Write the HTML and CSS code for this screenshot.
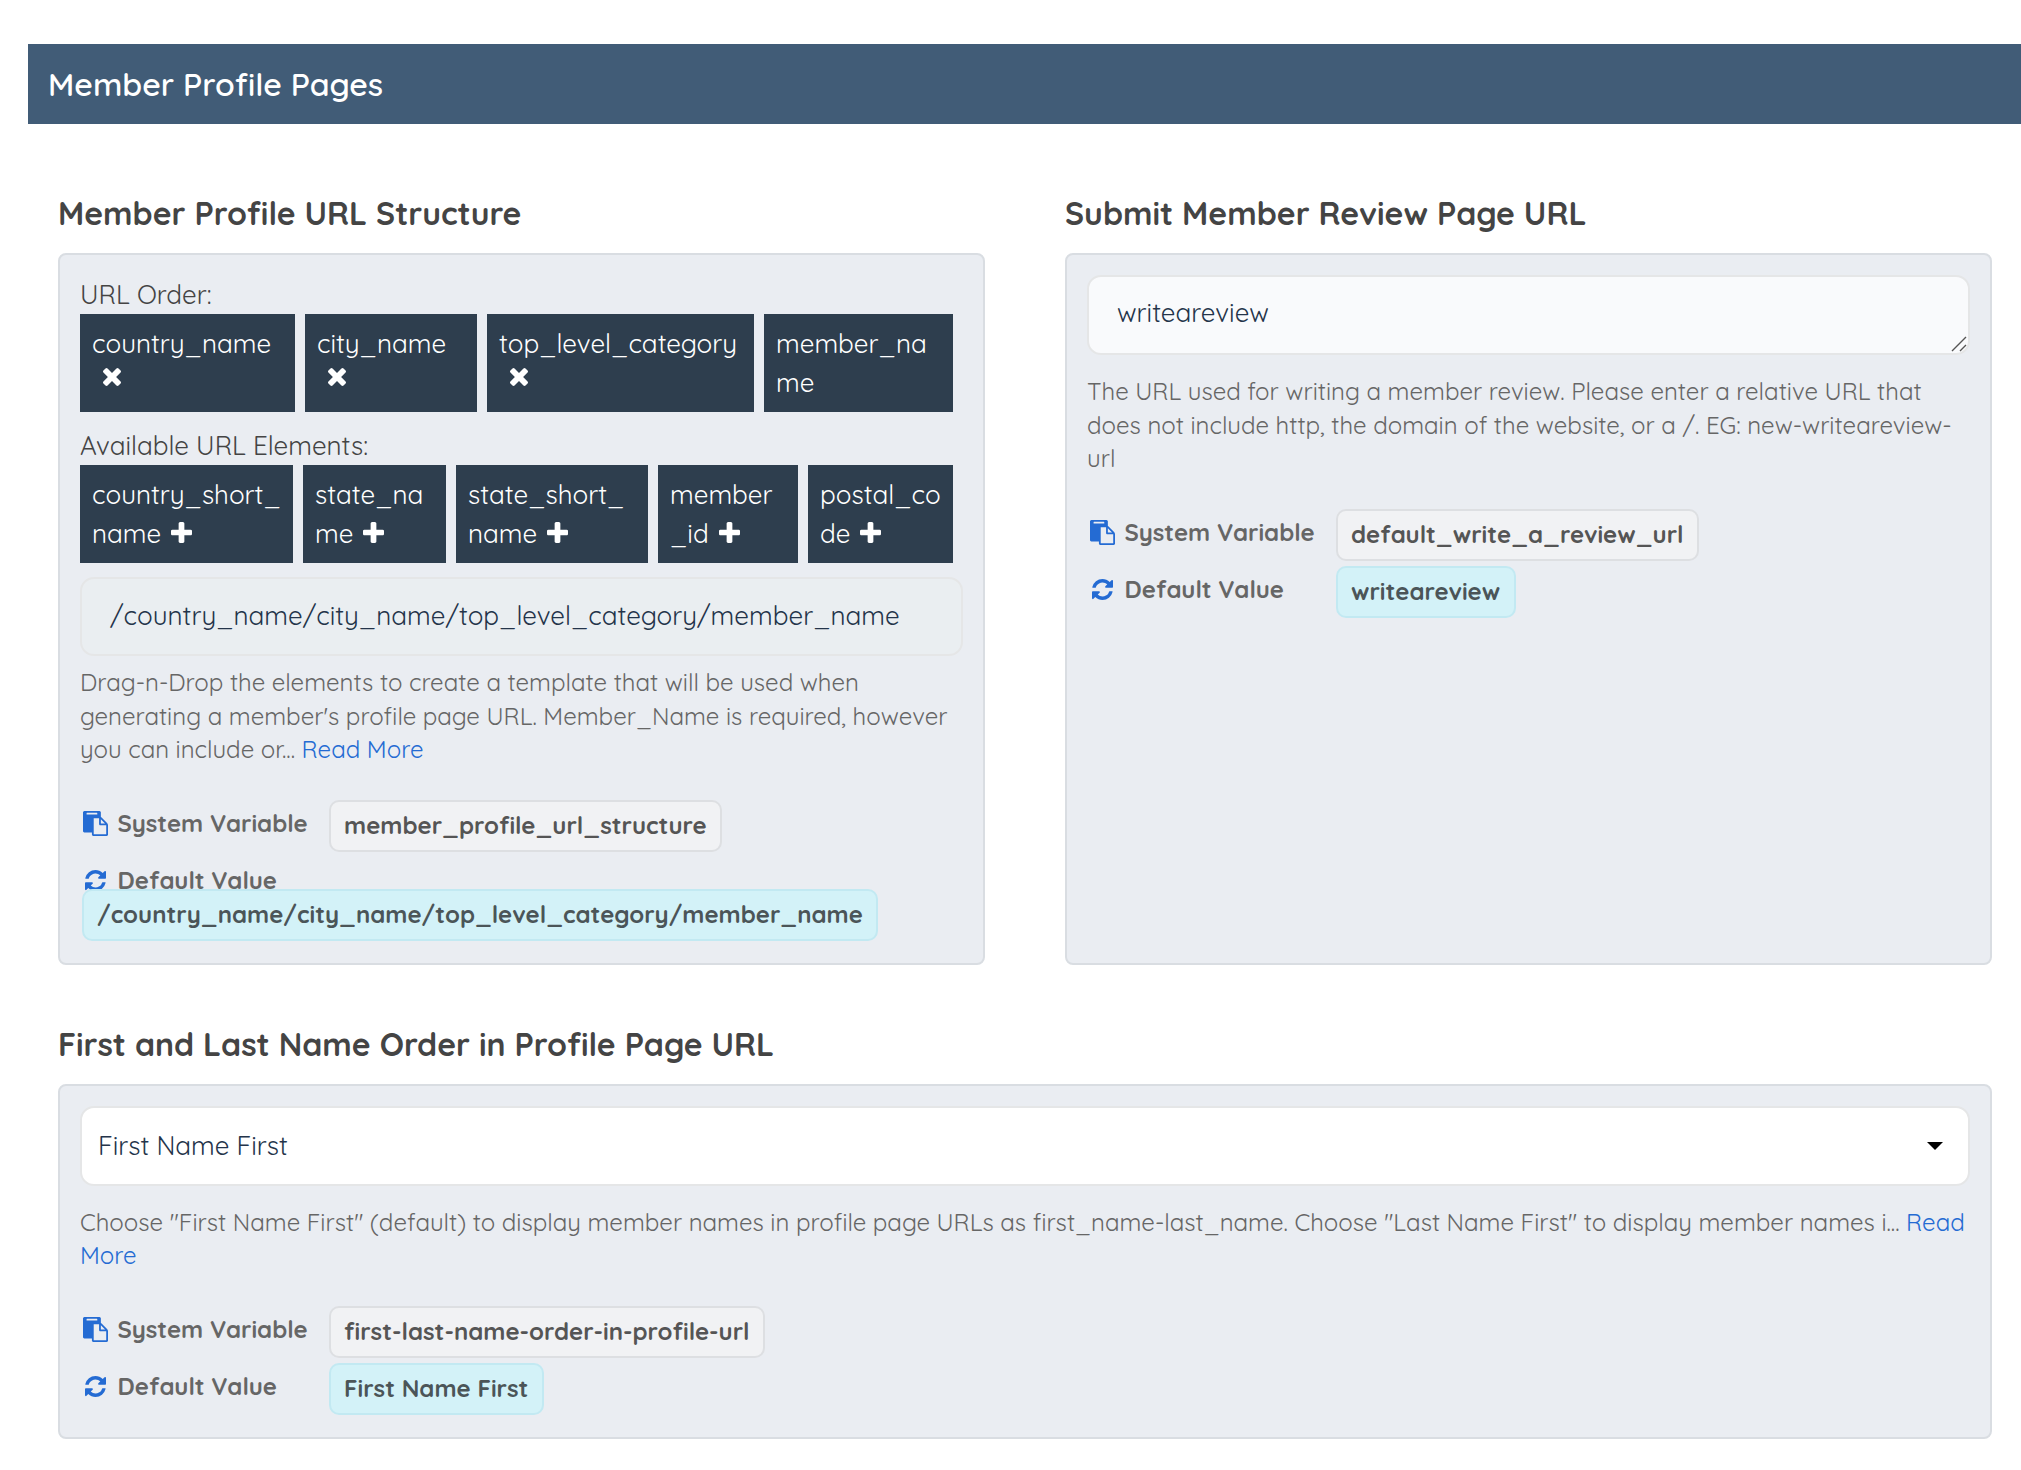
FILE: index.html
```html
<!DOCTYPE html>
<html lang="en">
<head>
<meta charset="utf-8">
<title>Member Profile Pages</title>
<link rel="stylesheet" href="styles.css">
</head>
<body>
<svg class="sprite" aria-hidden="true">
  <symbol id="plus" viewBox="192 128 1408 1408"><path d="M1600 736v192q0 40-28 68t-68 28h-416v416q0 40-28 68t-68 28h-192q-40 0-68-28t-28-68v-416h-416q-40 0-68-28t-28-68v-192q0-40 28-68t68-28h416v-416q0-40 28-68t68-28h192q40 0 68 28t28 68v416h416q40 0 68 28t28 68z"/></symbol>
  <symbol id="times" viewBox="302 366 1188 1188"><path d="M1490 1322q0 40-28 68l-136 136q-28 28-68 28t-68-28l-294-294-294 294q-28 28-68 28t-68-28l-136-136q-28-28-28-68t28-68l294-294-294-294q-28-28-28-68t28-68l136-136q28-28 68-28t68 28l294 294 294-294q28-28 68-28t68 28l136 136q28 28 28 68t-28 68l-294 294 294 294q28 28 28 68z"/></symbol>
  <symbol id="refresh" viewBox="128 128 1536 1536"><path d="M1639 1056q0 5-1 7-64 268-268 434.5t-478 166.5q-146 0-282.5-55t-243.5-157l-129 129q-19 19-45 19t-45-19-19-45v-448q0-26 19-45t45-19h448q26 0 45 19t19 45-19 45l-137 137q71 66 161 102t187 36q134 0 250-65t186-179q11-17 53-117 8-23 30-23h192q13 0 22.5 9.5t9.5 22.5zm25-800v448q0 26-19 45t-45 19h-448q-26 0-45-19t-19-45 19-45l138-138q-148-137-349-137-134 0-250 65t-186 179q-11 17-53 117-8 23-30 23h-199q-13 0-22.5-9.5t-9.5-22.5v-7q65-268 270-434.5t480-166.5q146 0 284 55.5t245 156.5l130-129q19-19 45-19t45 19 19 45z"/></symbol>
  <symbol id="paste" viewBox="0 0 1792 1792"><path d="M768 1664h896v-640h-416q-40 0-68-28t-28-68v-416h-384v1152zm256-1440v-64q0-13-9.5-22.5t-22.5-9.5h-704q-13 0-22.5 9.5t-9.5 22.5v64q0 13 9.5 22.5t22.5 9.5h704q13 0 22.5-9.5t9.5-22.5zm256 672h299l-299-299v299zm512 128v672q0 40-28 68t-68 28h-960q-40 0-68-28t-28-68v-160h-544q-40 0-68-28t-28-68v-1344q0-40 28-68t68-28h1088q40 0 68 28t28 68v328q21 13 36 28l408 408q28 28 48 76t20 88z"/></symbol>
</svg>

<header class="page-bar"><h1>Member Profile Pages</h1></header>

<main class="settings">
  <section class="setting">
    <h2>Member Profile URL Structure</h2>
    <div class="panel">
      <div class="list-label">URL Order:</div>
      <ul class="pills pills-order">
        <li class="pill">country_name<svg class="times"><use href="#times"/></svg></li>
        <li class="pill">city_name<svg class="times"><use href="#times"/></svg></li>
        <li class="pill">top_level_category<svg class="times"><use href="#times"/></svg></li>
        <li class="pill">member_na<br>me</li>
      </ul>
      <div class="list-label second">Available URL Elements:</div>
      <ul class="pills pills-available">
        <li class="pill">country_short_<br>name<svg class="plus"><use href="#plus"/></svg></li>
        <li class="pill">state_na<br>me<svg class="plus"><use href="#plus"/></svg></li>
        <li class="pill">state_short_<br>name<svg class="plus"><use href="#plus"/></svg></li>
        <li class="pill">member<br>_id<svg class="plus"><use href="#plus"/></svg></li>
        <li class="pill">postal_co<br>de<svg class="plus"><use href="#plus"/></svg></li>
      </ul>
      <div class="field readonly">/country_name/city_name/top_level_category/member_name</div>
      <p class="help help-tight">Drag-n-Drop the elements to create a template that will be used when<br>generating a member's profile page URL. Member_Name is required, however<br>you can include or... <a>Read More</a></p>
      <div class="meta">
        <div class="meta-label"><svg class="paste"><use href="#paste"/></svg>System Variable</div>
        <code class="badge">member_profile_url_structure</code>
      </div>
      <div class="meta wrapped">
        <div class="meta-label"><svg class="refresh"><use href="#refresh"/></svg>Default Value</div>
        <code class="badge default">/country_name/city_name/top_level_category/member_name</code>
      </div>
    </div>
  </section>

  <section class="setting">
    <h2>Submit Member Review Page URL</h2>
    <div class="panel">
      <div class="field editable">writeareview
        <svg class="grip" viewBox="0 0 16 16"><path d="M1 15L15 1M9 15l6-6"/></svg>
      </div>
      <p class="help">The URL used for writing a member review. Please enter a relative URL that<br>does not include http, the domain of the website, or a /. EG: new-writeareview-<br>url</p>
      <div class="meta">
        <div class="meta-label"><svg class="paste"><use href="#paste"/></svg>System Variable</div>
        <code class="badge">default_write_a_review_url</code>
      </div>
      <div class="meta">
        <div class="meta-label"><svg class="refresh"><use href="#refresh"/></svg>Default Value</div>
        <code class="badge default">writeareview</code>
      </div>
    </div>
  </section>

  <section class="setting wide">
    <h2>First and Last Name Order in Profile Page URL</h2>
    <div class="panel">
      <div class="field select">First Name First<svg class="caret" viewBox="0 0 16 8"><path d="M0 0h16L8 8z"/></svg></div>
      <p class="help">Choose "First Name First" (default) to display member names in profile page URLs as first_name-last_name. Choose "Last Name First" to display member names i... <a>Read<br>More</a></p>
      <div class="meta">
        <div class="meta-label"><svg class="paste"><use href="#paste"/></svg>System Variable</div>
        <code class="badge">first-last-name-order-in-profile-url</code>
      </div>
      <div class="meta">
        <div class="meta-label"><svg class="refresh"><use href="#refresh"/></svg>Default Value</div>
        <code class="badge default">First Name First</code>
      </div>
    </div>
  </section>
</main>
</body>
</html>
```
FILE: styles.css
```css
* { box-sizing: border-box; }

body {
  margin: 0;
  padding-top: 44px;
  background: #fff;
  color: #444;
  font: 400 26px/39px Quicksand, "Open Sans", sans-serif;
}

h1, h2, p, ul { margin: 0; padding: 0; }
a { color: #246bd3; }
svg { display: block; flex: none; fill: currentColor; }
.sprite { position: absolute; width: 0; height: 0; }

.page-bar {
  display: flex;
  align-items: center;
  height: 80px;
  margin-left: 28px;
  padding-left: 20px;
  background: #415c77;
  color: #fff;
}
h1 { font-size: 32px; font-weight: 600; line-height: 40px; }

.settings {
  display: grid;
  grid-template-columns: 927px 927px;
  gap: 59px 80px;
  padding: 69px 0 0 58px;
}
.wide { grid-column: span 2; }
.setting { display: flex; flex-direction: column; }
h2 { margin-bottom: 20px; font-size: 32px; font-weight: 700; line-height: 40px; color: #444; }

.panel {
  flex: 1;
  padding: 20px 20px 22px;
  border: 2px solid #d9dde2;
  border-radius: 8px;
  background: #eaedf2;
}

.list-label { height: 39px; line-height: 39px; }
.list-label.second { height: 53px; padding-top: 14px; line-height: 40px; }

.pills { display: grid; gap: 10px; list-style: none; color: #fff; }
.pills-order { grid-template-columns: 215px 172px 267px 189px; }
.pills-available { grid-template-columns: 213px 143px 192px 140px 145px; }
.pill { height: 98px; padding: 10px 0 0 12px; background: #2e3e4e; white-space: nowrap; }
.times { width: 18px; height: 18px; margin: 5px 0 0 11px; }
.plus { display: inline-block; width: 21px; height: 21px; margin-left: 10px; }

.field {
  display: flex;
  align-items: center;
  height: 80px;
  border: 2px solid #e5e6e7;
  border-radius: 14px;
  background: #fff;
  color: #24344a;
}
.readonly { height: 79px; margin-top: 14px; padding: 0 0 2px 28px; background: #eaeef1; }
.editable { position: relative; padding: 0 0 5px 28px; background: #f9fafc; }
.grip { position: absolute; right: 1px; bottom: 1px; width: 16px; height: 16px; fill: none; stroke: #555; stroke-width: 1.4; }
.select { justify-content: space-between; padding: 0 25px 0 16px; }
.caret { width: 16px; height: 8px; color: #000; }

.help { margin-top: 20px; font-size: 24px; line-height: 33.5px; color: #666; white-space: nowrap; }
.help-tight { margin-top: 10px; }

.meta { display: flex; height: 52px; margin-top: 5px; font-size: 24px; font-weight: 700; }
.help + .meta { margin-top: 33px; }
.meta-label {
  display: flex;
  align-items: center;
  width: 249px;
  height: 47px;
  padding-left: 3px;
  color: #666;
}
.paste { width: 25px; height: 25px; margin-right: 9.5px; color: #246bd3; }
.refresh { width: 21px; height: 21px; margin: 0 11.5px 0 2px; color: #246bd3; }
.badge {
  height: 52px;
  padding: 0 13.5px 0 13px;
  border: 2px solid #dddfe2;
  border-radius: 10px;
  background: #f1f2f4;
  color: #555;
  font: inherit;
  line-height: 47px;
}
.badge.default { border-color: #c2e9f2; background: #d3f2f8; color: #4b5558; }
.wrapped { display: block; height: auto; }
.wrapped .badge { position: relative; display: block; width: fit-content; margin: -15px 0 0 2px; }
```
